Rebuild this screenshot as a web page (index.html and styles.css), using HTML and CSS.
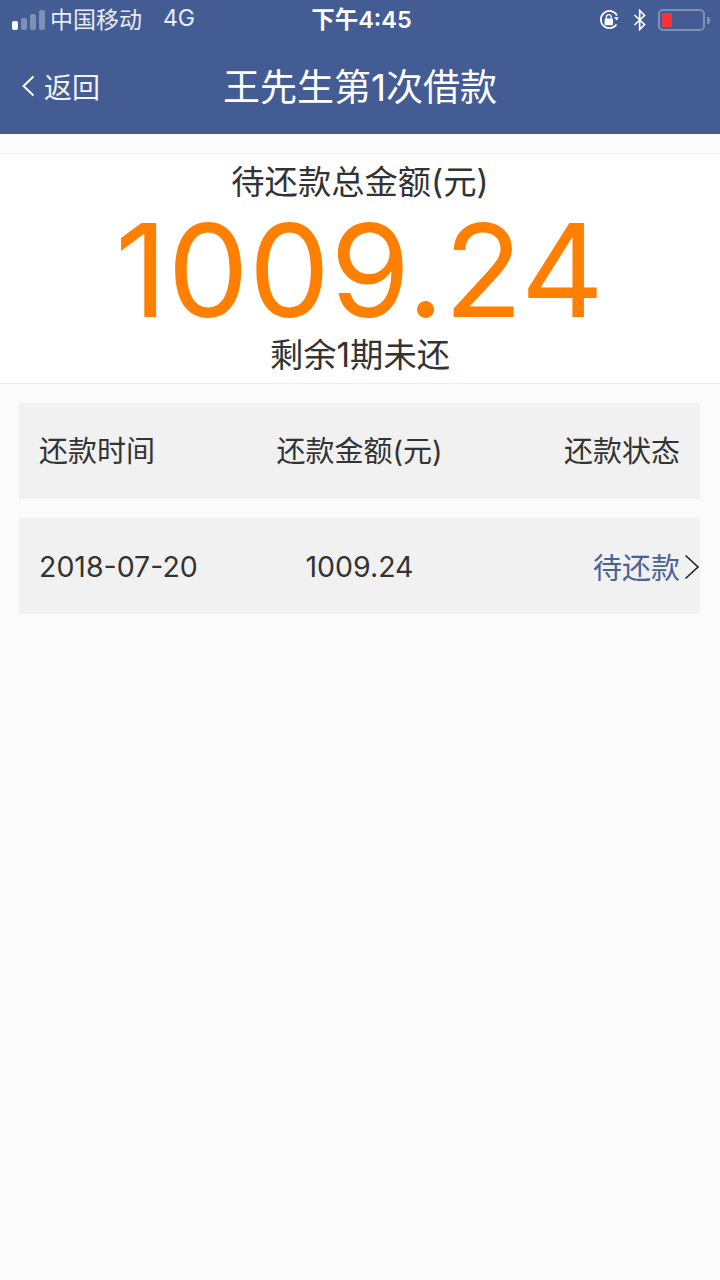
FILE: index.html
```html
<!DOCTYPE html>
<html lang="zh">
<head>
<meta charset="utf-8">
<title>借款</title>
<link rel="stylesheet" href="styles.css">
</head>
<body>
<header class="top">
  <div class="status">
    <div class="status-left">
      <span class="signal"><i class="on"></i><i></i><i></i><i></i></span>
      <span class="carrier">中国移动</span>
      <span class="net">4G</span>
    </div>
    <div class="clock">下午4:45</div>
    <div class="status-right">
      <svg class="lock" viewBox="0 0 24 22" width="24" height="22"><path d="M18.5 15.5A8.6 8.6 0 1 1 19 6.5" fill="none" stroke="#fff" stroke-width="1.7"/><path d="M20.8 8.2h-5l3 3.2z" fill="#fff"/><rect x="6.6" y="9.6" width="8.4" height="6.6" rx="1" fill="#fff"/><path d="M8.4 9.8V8a2.4 2.4 0 0 1 4.8 0v1.8" fill="none" stroke="#fff" stroke-width="1.3"/></svg>
      <svg class="bt" viewBox="0 0 14 22" width="14" height="22"><path d="M1.5 6l10 9.5L6.7 20.5V1.5l4.8 5L1.5 16" fill="none" stroke="#fff" stroke-width="1.7"/></svg>
      <span class="battery"><span class="level"></span></span><span class="nub"></span>
    </div>
  </div>
  <nav class="nav">
    <a class="back">
      <svg viewBox="0 0 14 24" width="14" height="24"><path d="M12.5 2.5L2.5 12l10 9.5" fill="none" stroke="#fff" stroke-width="2"/></svg>
      <span>返回</span>
    </a>
    <h1>王先生第1次借款</h1>
  </nav>
</header>
<section class="summary">
  <p class="label">待还款总金额(元)</p>
  <p class="amount">1009.24</p>
  <p class="label remain">剩余1期未还</p>
</section>
<section class="table">
  <div class="row head">
    <span class="c1">还款时间</span><span class="c2">还款金额(元)</span><span class="c3">还款状态</span>
  </div>
  <div class="row">
    <span class="c1 num">2018-07-20</span><span class="c2 num">1009.24</span>
    <span class="c3 state">待还款<svg viewBox="0 0 16 26" width="16" height="26"><path d="M1.5 1.5L14 13 1.5 24.5" fill="none" stroke="#222" stroke-width="1.6"/></svg></span>
  </div>
</section>
</body>
</html>
```
FILE: styles.css
```css
* { box-sizing: border-box; }
html, body { margin: 0; padding: 0; }
body {
  width: 720px;
  height: 1280px;
  overflow: hidden;
  background: #fbfbfb;
  color: #333;
  font-family: "Inter", "Noto Sans CJK SC", sans-serif;
}
.top { background: #435c93; color: #fff; height: 134px; }
.status { height: 40px; display: flex; justify-content: space-between; align-items: center; position: relative; }
.status-left { display: flex; align-items: center; padding-left: 12px; font-size: 23px; }
.signal { display: flex; gap: 3px; align-items: flex-end; margin-right: 5px; height: 20px; margin-top: -1px; }
.signal i { width: 6px; background: #7f90b6; border-radius: 2px; }
.signal i:nth-child(1) { height: 9px; background: #fff; }
.signal i:nth-child(2) { height: 12px; }
.signal i:nth-child(3) { height: 16px; }
.signal i:nth-child(4) { height: 20px; }
.carrier { color: #e8ecf4; margin-top: -4px; }
.net { margin-left: 21px; color: #e8ecf4; margin-top: -4px; }
.clock { position: absolute; left: 0; right: 0; top: 0; text-align: center; font-size: 23.5px; line-height: 39px; font-weight: 600; padding-left: 3px; pointer-events: none; }
.status-right { display: flex; align-items: center; padding-right: 10px; }
.lock { margin-right: 11px; }
.bt { margin-right: 11px; }
.battery { width: 47px; height: 22px; border: 2px solid #7f90b6; border-radius: 5px; padding: 2px; display: block; }
.level { display: block; width: 10px; height: 100%; background: #f6323a; border-radius: 1px; }
.nub { width: 3px; height: 7px; background: #7f90b6; margin-left: 2px; border-radius: 0 2px 2px 0; }
.nav { height: 94px; display: flex; align-items: center; justify-content: center; position: relative; padding-bottom: 4px; }
.nav h1 { margin: 0; font-size: 37px; font-weight: 400; }
.back { position: absolute; left: 21px; top: 0; height: 92px; display: flex; align-items: center; gap: 9px; font-size: 28px; color: #f2f4f8; }
.summary {
  margin-top: 19px;
  height: 231px;
  background: #fff;
  border-top: 1px solid #f1f1f1;
  border-bottom: 1px solid #eeeeee;
  display: flex;
  flex-direction: column;
  align-items: center;
}
.summary p { margin: 0; }
.label { font-size: 33.3px; line-height: 54px; color: #333; padding-top: 1px; height: 54px; }
.amount { font-size: 129px; line-height: 122px; color: #ff8000; font-weight: 400; height: 122px; padding-top: 1px; padding-right: 1px; }
.label.remain { line-height: 50px; padding-top: 0; }
.table { padding: 19px 20px 0 19px; display: flex; flex-direction: column; gap: 19px; }
.row {
  height: 96px;
  background: #f1f1f1;
  display: grid;
  grid-template-columns: 1fr 1fr 1fr;
  align-items: center;
  padding: 0 20px;
  font-size: 29px;
  color: #333;
}
.row.head { padding-bottom: 4px; }
.num { font-size: 28.5px; }
.c2 { text-align: center; }
.c3 { text-align: right; }
.state { color: #4a6296; position: relative; }
.state svg { position: absolute; right: -20px; top: 50%; margin-top: -12px; }
```
